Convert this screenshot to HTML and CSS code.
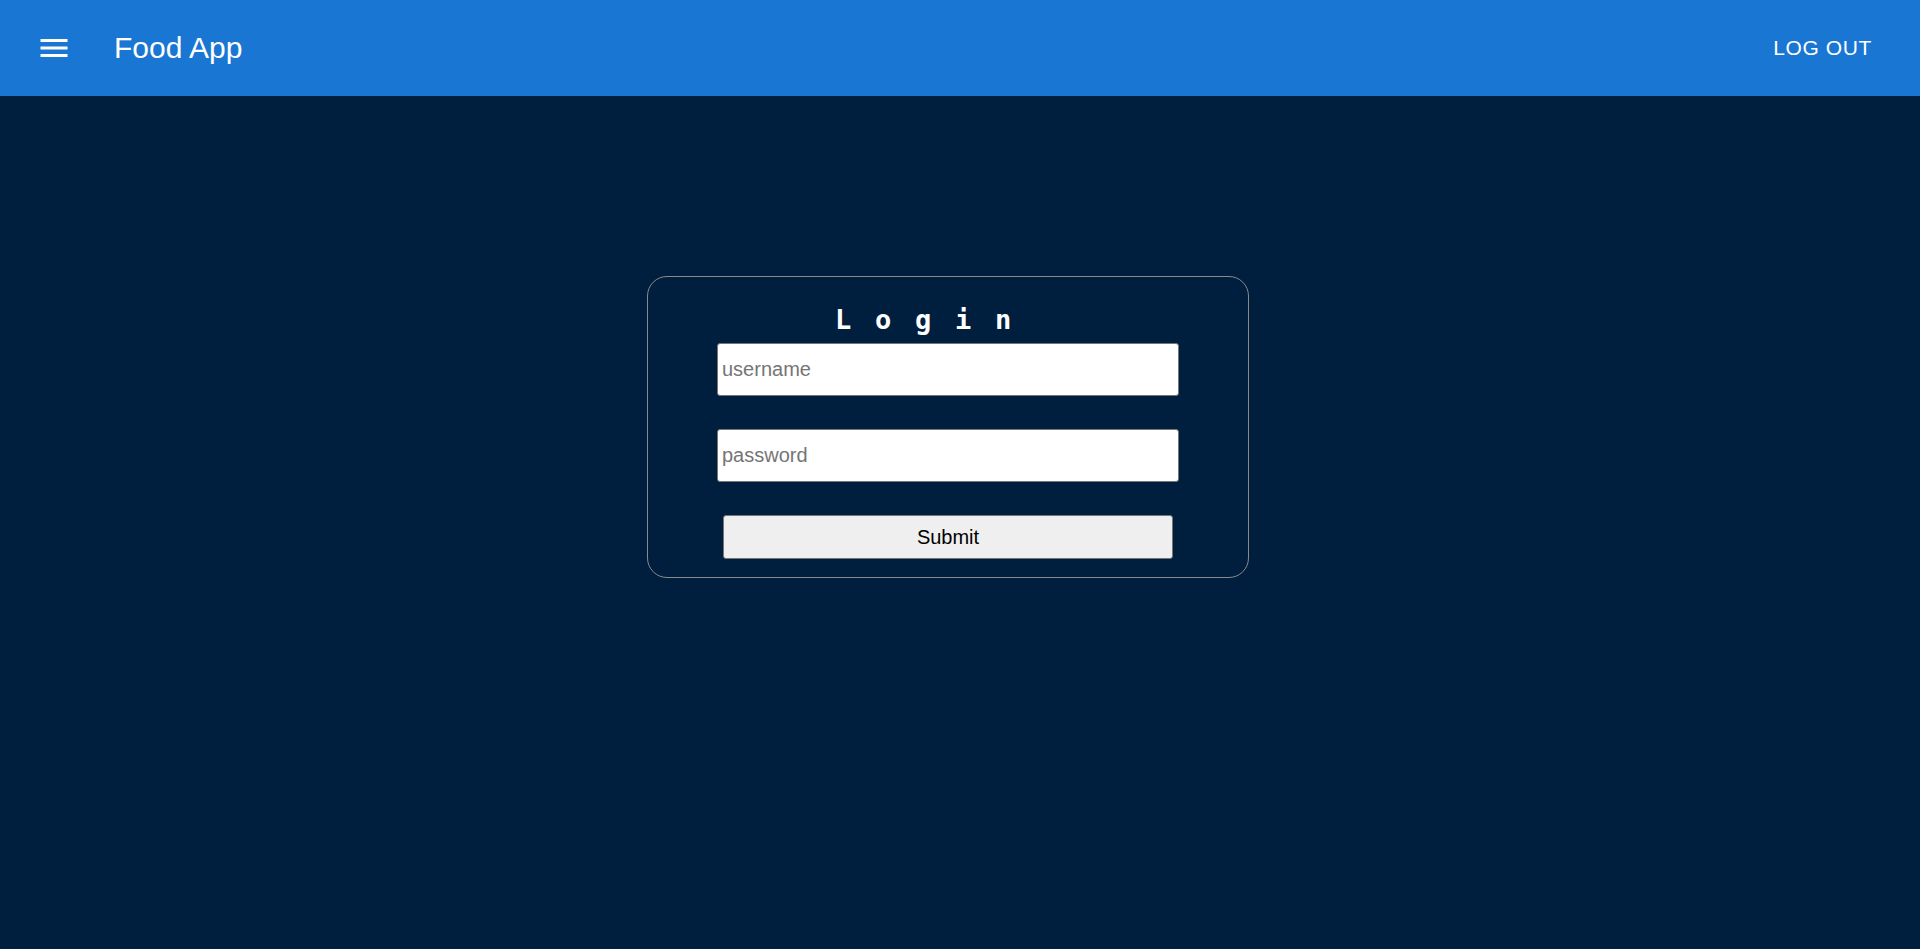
FILE: index.html
```html
<!DOCTYPE html>
<html lang="en">
<head>
<meta charset="utf-8">
<title>Food App</title>
<link rel="stylesheet" href="styles.css">
</head>
<body>
<header class="appbar">
  <div class="toolbar">
    <button class="menu-btn" aria-label="menu">
      <svg class="menu-icon" viewBox="0 0 24 24" width="36" height="36"><path d="M3 18h18v-2H3v2zm0-5h18v-2H3v2zm0-7v2h18V6H3z"/></svg>
    </button>
    <div class="app-title">Food App</div>
    <button class="logout-btn">Log out</button>
  </div>
</header>
<main class="main">
  <form class="card">
    <h2 class="card-title">Login</h2>
    <input class="field" type="text" placeholder="username">
    <input class="field" type="password" placeholder="password">
    <button class="submit" type="button">Submit</button>
  </form>
</main>
</body>
</html>
```
FILE: styles.css
```css
* { box-sizing: border-box; }
html, body { margin: 0; padding: 0; }
body {
  background: #001f3f;
  min-height: 949px;
  font-family: "Liberation Sans", Arial, sans-serif;
}
.appbar {
  background: #1976d2;
  color: #fff;
  height: 96px;
}
.toolbar {
  display: flex;
  align-items: center;
  height: 96px;
  padding: 0 36px;
}
.menu-btn {
  display: flex;
  align-items: center;
  justify-content: center;
  background: none;
  border: 0;
  padding: 0;
  width: 72px;
  height: 72px;
  margin-left: -18px;
  margin-right: 24px;
  cursor: pointer;
}
.menu-icon { fill: #fff; display: block; }
.app-title {
  flex: 1;
  font-size: 30px;
  line-height: 1;
  font-weight: 400;
}
.logout-btn {
  background: none;
  border: 0;
  color: #fff;
  font-family: "Liberation Sans", Arial, sans-serif;
  font-size: 21px;
  letter-spacing: 0.6px;
  text-transform: uppercase;
  padding: 9px 12px;
  line-height: 1.3;
  cursor: pointer;
}
.main {
  display: flex;
  justify-content: center;
  padding: 180px 24px 0 0;
}
.card {
  width: 602px;
  border: 1px solid #8a8a8a;
  border-radius: 20px;
  padding: 29px 0 18px;
  display: flex;
  flex-direction: column;
  align-items: center;
}
.card-title {
  margin: 0 26px 10px 0;
  font-family: "DejaVu Sans Mono", monospace;
  font-weight: 700;
  font-size: 27px;
  line-height: 27px;
  height: 27px;
  letter-spacing: 23.75px;
  color: #fff;
  text-align: center;
}
.field {
  width: 462px;
  height: 53px;
  border: 1px solid #767676;
  border-radius: 3px;
  background: #fff;
  padding: 0 4px;
  font-family: "Liberation Sans", Arial, sans-serif;
  font-size: 20px;
  color: #000;
  margin-bottom: 33px;
}
.field::placeholder { color: #757575; }
.submit {
  width: 450px;
  height: 44px;
  background: #efefef;
  border: 1px solid #767676;
  border-radius: 3px;
  font-family: "Liberation Sans", Arial, sans-serif;
  font-size: 20px;
  color: #000;
  padding: 0;
}
```
